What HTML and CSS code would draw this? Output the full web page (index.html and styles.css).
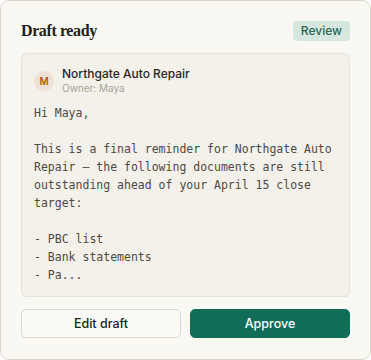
FILE: index.html
```html
<!DOCTYPE html>
<html lang="en">
<head>
    <meta charset="UTF-8">
    <meta name="viewport" content="width=device-width, initial-scale=1.0">
    <title>Draft ready</title>
    <link rel="stylesheet" href="styles.css">
</head>
<body>

<!-- Draft card -->
<div class="card">
    <div class="card-header">
        <h3 class="card-title">Draft ready</h3>
        <span class="badge">Review</span>
    </div>

    <!-- Email preview -->
    <div class="preview">
        <div class="client">
            <div class="avatar">M</div>
            <div class="client-info">
                <div class="client-name">Northgate Auto Repair</div>
                <div class="client-owner">Owner: Maya</div>
            </div>
        </div>
        <pre class="message">Hi Maya,

This is a final reminder for Northgate Auto
Repair — the following documents are still
outstanding ahead of your April 15 close
target:

- PBC list
- Bank statements
- Pa...</pre>
    </div>

    <div class="actions">
        <button class="button button-secondary">Edit draft</button>
        <button class="button button-primary">Approve</button>
    </div>
</div>

</body>
</html>
```

FILE: styles.css
```css
body {
    margin: 0;
    padding: 0;
    font-family: Inter, 'Noto Sans', sans-serif;
    background-color: #ffffff;
}

.card {
    box-sizing: border-box;
    width: 371px;
    height: 360px;
    padding: 20px;
    background-color: #faf8f3;
    border: 1px solid #dcd6c6;
    border-radius: 9px;
    display: flex;
    flex-direction: column;
}

.card-header {
    display: flex;
    align-items: center;
    justify-content: space-between;
    height: 20px;
}

.card-title {
    margin: 0;
    font-family: 'Liberation Serif', 'DejaVu Serif', serif;
    font-size: 16px;
    font-weight: bold;
    letter-spacing: -0.4px;
    color: #221e18;
}

.badge {
    background-color: #d6e7df;
    color: #26685a;
    font-size: 12px;
    font-weight: 500;
    line-height: 20px;
    padding: 0 8px;
    border-radius: 4px;
}

.preview {
    margin-top: 12px;
    height: 244px;
    box-sizing: border-box;
    padding: 12px;
    background-color: #f4f1ea;
    border: 1px solid #e8e3d7;
    border-radius: 6px;
}

.client {
    display: flex;
    align-items: center;
    gap: 8px;
}

.avatar {
    width: 20px;
    height: 20px;
    border-radius: 50%;
    background-color: #efe1d5;
    color: #b0532c;
    font-size: 10px;
    font-weight: 600;
    display: flex;
    align-items: center;
    justify-content: center;
}

.client-name {
    font-size: 12px;
    font-weight: 500;
    line-height: 16px;
    color: #2a251f;
}

.client-owner {
    font-size: 10px;
    line-height: 13px;
    color: #aaa397;
}

.message {
    margin: 9px 0 0 0;
    font-family: 'DejaVu Sans Mono', 'Liberation Mono', monospace;
    font-size: 11.5px;
    line-height: 18px;
    color: #4e4943;
    white-space: pre;
}

.actions {
    display: flex;
    gap: 9px;
    margin-top: 12px;
}

.button {
    flex: 1;
    height: 29px;
    border-radius: 5px;
    font-family: Inter, 'Noto Sans', sans-serif;
    font-size: 12.5px;
    font-weight: 500;
    cursor: pointer;
}

.button-secondary {
    background-color: #fbfaf6;
    border: 1px solid #dcd7c8;
    color: #221e18;
}

.button-primary {
    background-color: #116d57;
    border: 1px solid #116d57;
    color: #ffffff;
}
```
